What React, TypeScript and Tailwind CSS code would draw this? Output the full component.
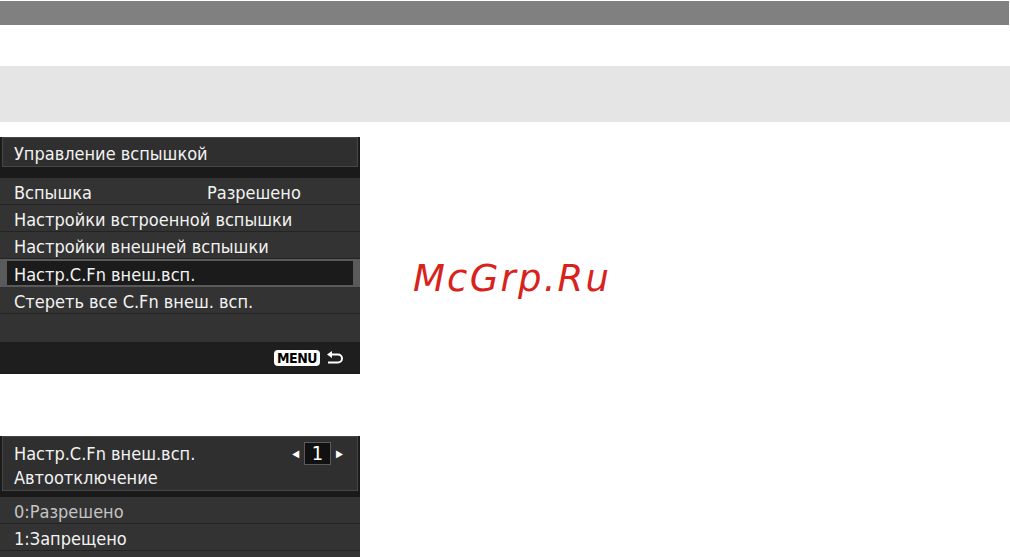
const font = { fontFamily: '"DejaVu Sans Condensed", "Liberation Sans Narrow", "DejaVu Sans", sans-serif' };

const Row = ({ children, dim }: { children?: React.ReactNode; dim?: boolean }) => (
  <div
    className={`h-[27px] flex items-center pt-[2px] pl-[14px] pr-[58px] bg-[#333333] border-b border-[#232323] text-[18px] ${
      dim ? "text-[#c4c4c4]" : "text-[#f2f2f2]"
    }`}
  >
    {children}
  </div>
);

const ReturnArrow = () => (
  <svg width="18" height="14" viewBox="0 0 18 14" className="ml-[6px]">
    <path d="M5 3.5 H12 A4 4 0 0 1 12 11.5 H2" fill="none" stroke="white" strokeWidth="2" />
    <path d="M1 3.5 L6 0 L6 7 Z" fill="white" />
  </svg>
);

const FlashPanel = () => (
  <div className="w-[360px] bg-[#1b1b1b]" style={font}>
    <div className="h-[30px] mx-[2px] border border-[#474747] bg-[#2f2f2f] flex items-center pt-[3px] pl-[11px] text-[18px] text-[#f2f2f2]">
      Управление вспышкой
    </div>
    <div className="h-[11px] bg-[#1a1a1a]" />
    <Row>
      <span className="w-[193px]">Вспышка</span>
      <span>Разрешено</span>
    </Row>
    <Row>Настройки встроенной вспышки</Row>
    <Row>Настройки внешней вспышки</Row>
    <div className="h-[28px] bg-[#5a5a5a] px-[7px] py-[2px]">
      <div className="h-full bg-[#1b1b1b] flex items-center pt-[2px] pl-[7px] text-[18px] text-[#f2f2f2]">
        Настр.C.Fn внеш.всп.
      </div>
    </div>
    <Row>Стереть все C.Fn внеш. всп.</Row>
    <div className="h-[28px] bg-[#333333]" />
    <div className="h-[32px] bg-[#1e1e1e] flex items-center justify-end pr-[16px]">
      <span className="h-[16px] px-[3px] rounded-[4px] bg-white text-black font-bold text-[14px] leading-[16px] tracking-[-0.5px]">
        MENU
      </span>
      <ReturnArrow />
    </div>
  </div>
);

const CfnPanel = () => (
  <div className="w-[360px] bg-[#1b1b1b]" style={font}>
    <div className="h-[55px] mx-[2px] border border-[#454545] bg-[#2f2f2f] pl-[11px] pr-[14px] pt-[4px] text-[18px] text-[#f2f2f2]">
      <div className="flex items-center h-[24px]">
        <span className="flex-1">Настр.C.Fn внеш.всп.</span>
        <span className="text-[10px] text-white mr-[5px]">◀</span>
        <span className="w-[27px] h-[23px] bg-[#111111] border border-[#5a5a5a] flex items-center justify-center text-[20px] text-white">
          1
        </span>
        <span className="text-[10px] text-white ml-[5px]">▶</span>
      </div>
      <div className="h-[24px] flex items-center">Автоотключение</div>
    </div>
    <div className="h-[6px] bg-[#1a1a1a]" />
    <Row dim>0:Разрешено</Row>
    <Row>1:Запрещено</Row>
    <Row />
  </div>
);

export default function App() {
  return (
    <div className="w-[1010px] h-[557px] overflow-hidden bg-white pt-[1px]">
      <div className="h-[24px] w-[1009px] bg-[#808080]" />
      <div className="mt-[41px] h-[56px] bg-[#e5e5e5]" />
      <div className="mt-[15px] flex">
        <FlashPanel />
        <div
          className="ml-[53px] pt-[122px] text-[37px] leading-[40px] italic text-[#d8231d] tracking-[2.2px]"
          style={{ fontFamily: '"DejaVu Sans", sans-serif' }}
        >
          McGrp.Ru
        </div>
      </div>
      <div className="mt-[62px]">
        <CfnPanel />
      </div>
    </div>
  );
}
